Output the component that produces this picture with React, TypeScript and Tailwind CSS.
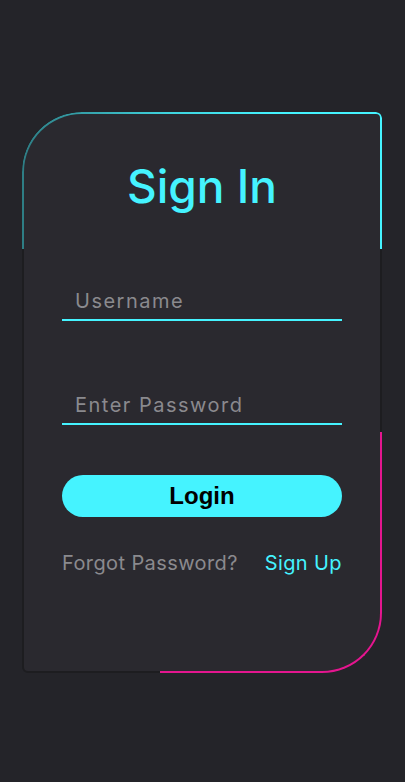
import { useState } from 'react';

export default function App() {
  const [username, setUsername] = useState('');
  const [password, setPassword] = useState('');

  return (
    <div className="min-h-screen bg-[#242429] pt-[112px] font-['Inter','Noto_Sans',sans-serif]">
      {/* Card */}
      <div className="relative ml-[22px] w-[360px] h-[561px] bg-[#2a292f] border-2 border-[#1d1d20] rounded-tl-[60px] rounded-br-[60px] rounded-tr-[6px] rounded-bl-[6px] px-[38px] pt-[42px]">
        {/* Glow borders */}
        <div className="pointer-events-none absolute -top-0.5 -left-0.5 -right-0.5 h-[137px] border-t-2 border-x-2 border-[#45f3ff] rounded-tl-[60px] rounded-tr-[6px] [mask-image:linear-gradient(to_right,rgba(0,0,0,0.45),rgba(0,0,0,0.85)_40%,black_70%)]" />
        <div className="pointer-events-none absolute -bottom-0.5 -right-0.5 w-[222px] h-[241px] border-b-2 border-r-2 border-[#e4168f] rounded-br-[60px]" />

        <h2 className="text-center text-[46px] leading-[60px] font-medium text-[#45f3ff]">Sign In</h2>

        <div className="mt-[61px] h-[44px] flex items-end border-b-2 border-[#45f3ff] px-[13px] pb-[4px]">
          <input
            value={username}
            onChange={(e) => setUsername(e.target.value)}
            placeholder="Username"
            className="w-full bg-transparent outline-none text-[20px] leading-[28px] tracking-[1.5px] text-white placeholder:text-[#8a8a8e]"
          />
        </div>

        <div className="mt-[60px] h-[44px] flex items-end border-b-2 border-[#45f3ff] px-[13px] pb-[4px]">
          <input
            type="password"
            value={password}
            onChange={(e) => setPassword(e.target.value)}
            placeholder="Enter Password"
            className="w-full bg-transparent outline-none text-[20px] leading-[28px] tracking-[1.5px] text-white placeholder:text-[#8a8a8e]"
          />
        </div>

        <button className="mt-[50px] w-full h-[42px] rounded-full bg-[#45f3ff] text-black text-[24px] font-bold font-['Liberation_Sans',Arial,sans-serif] leading-none">
          Login
        </button>

        <div className="mt-[32px] flex justify-between items-center text-[20px] leading-[28px] tracking-[0.4px]">
          <a className="text-[#8a8a8e] cursor-pointer">Forgot Password?</a>
          <a className="text-[#45f3ff] cursor-pointer">Sign Up</a>
        </div>
      </div>
    </div>
  );
}
